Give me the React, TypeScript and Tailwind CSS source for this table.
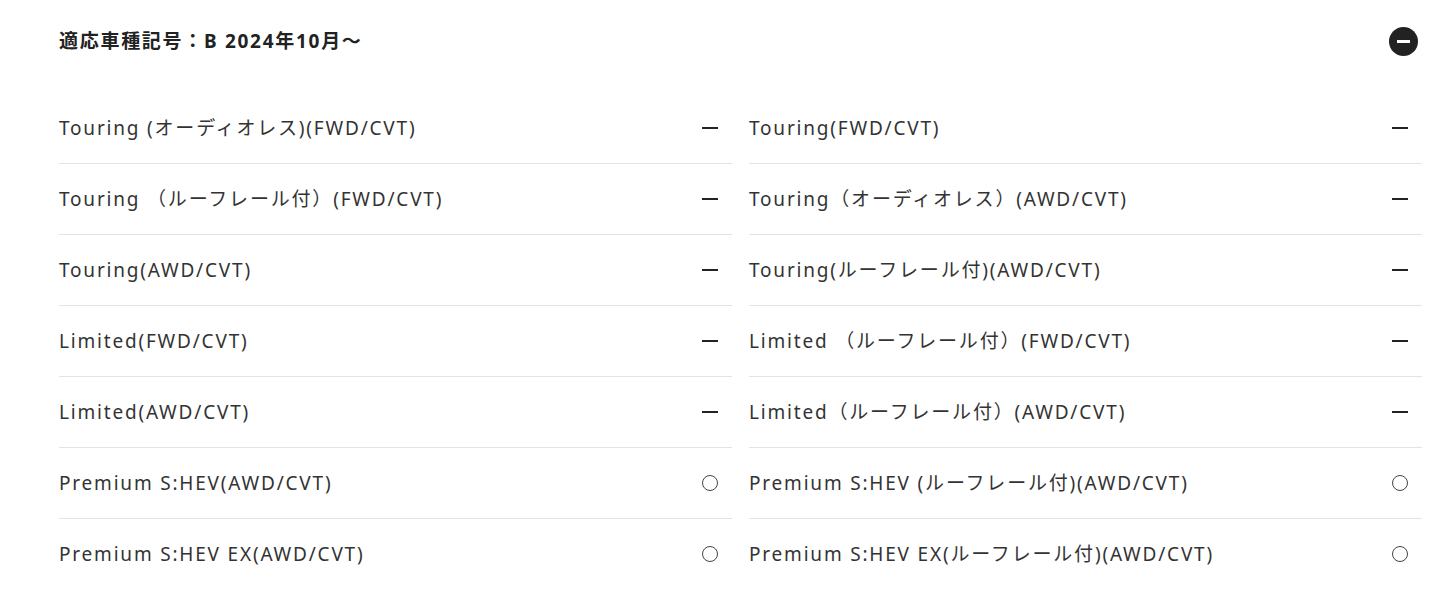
import React from 'react';

type Item = { name: string; mark: 'dash' | 'circle' };

const items: Item[] = [
  { name: 'Touring (オーディオレス)(FWD/CVT)', mark: 'dash' },
  { name: 'Touring(FWD/CVT)', mark: 'dash' },
  { name: 'Touring （ルーフレール付）(FWD/CVT)', mark: 'dash' },
  { name: 'Touring（オーディオレス）(AWD/CVT)', mark: 'dash' },
  { name: 'Touring(AWD/CVT)', mark: 'dash' },
  { name: 'Touring(ルーフレール付)(AWD/CVT)', mark: 'dash' },
  { name: 'Limited(FWD/CVT)', mark: 'dash' },
  { name: 'Limited （ルーフレール付）(FWD/CVT)', mark: 'dash' },
  { name: 'Limited(AWD/CVT)', mark: 'dash' },
  { name: 'Limited（ルーフレール付）(AWD/CVT)', mark: 'dash' },
  { name: 'Premium S:HEV(AWD/CVT)', mark: 'circle' },
  { name: 'Premium S:HEV (ルーフレール付)(AWD/CVT)', mark: 'circle' },
  { name: 'Premium S:HEV EX(AWD/CVT)', mark: 'circle' },
  { name: 'Premium S:HEV EX(ルーフレール付)(AWD/CVT)', mark: 'circle' },
];

function Mark({ type }: { type: Item['mark'] }) {
  if (type === 'dash') {
    return <span className="block w-4 h-[2px] bg-[#222]" />;
  }
  return <span className="block w-4 h-4 rounded-full border border-[#444]" />;
}

export default function App() {
  return (
    <div
      className="bg-white text-[#333] pl-[59px] pr-[26px] h-[589px] overflow-hidden"
      style={{ fontFamily: '"Noto Sans", "Noto Sans CJK JP", sans-serif' }}
    >
      {/* Header */}
      <div className="flex items-center justify-between h-[82px]">
        <h2 className="text-[19px] font-bold text-[#222] tracking-[0.09em]">
          適応車種記号：B 2024年10月～
        </h2>
        <span className="mr-[4px] flex items-center justify-center w-[29px] h-[29px] rounded-full bg-[#222]">
          <span className="block w-[13px] h-[3px] bg-white" />
        </span>
      </div>

      {/* Grade list */}
      <div className="mt-[11px] grid grid-cols-2 gap-x-[17px]">
        {items.map((item) => (
          <div
            key={item.name}
            className="flex items-center justify-between h-[71px] border-b border-[#e3e3e3]"
          >
            <span className="text-[19px] tracking-[0.095em]">{item.name}</span>
            <span className="mr-[14px]">
              <Mark type={item.mark} />
            </span>
          </div>
        ))}
      </div>
    </div>
  );
}
